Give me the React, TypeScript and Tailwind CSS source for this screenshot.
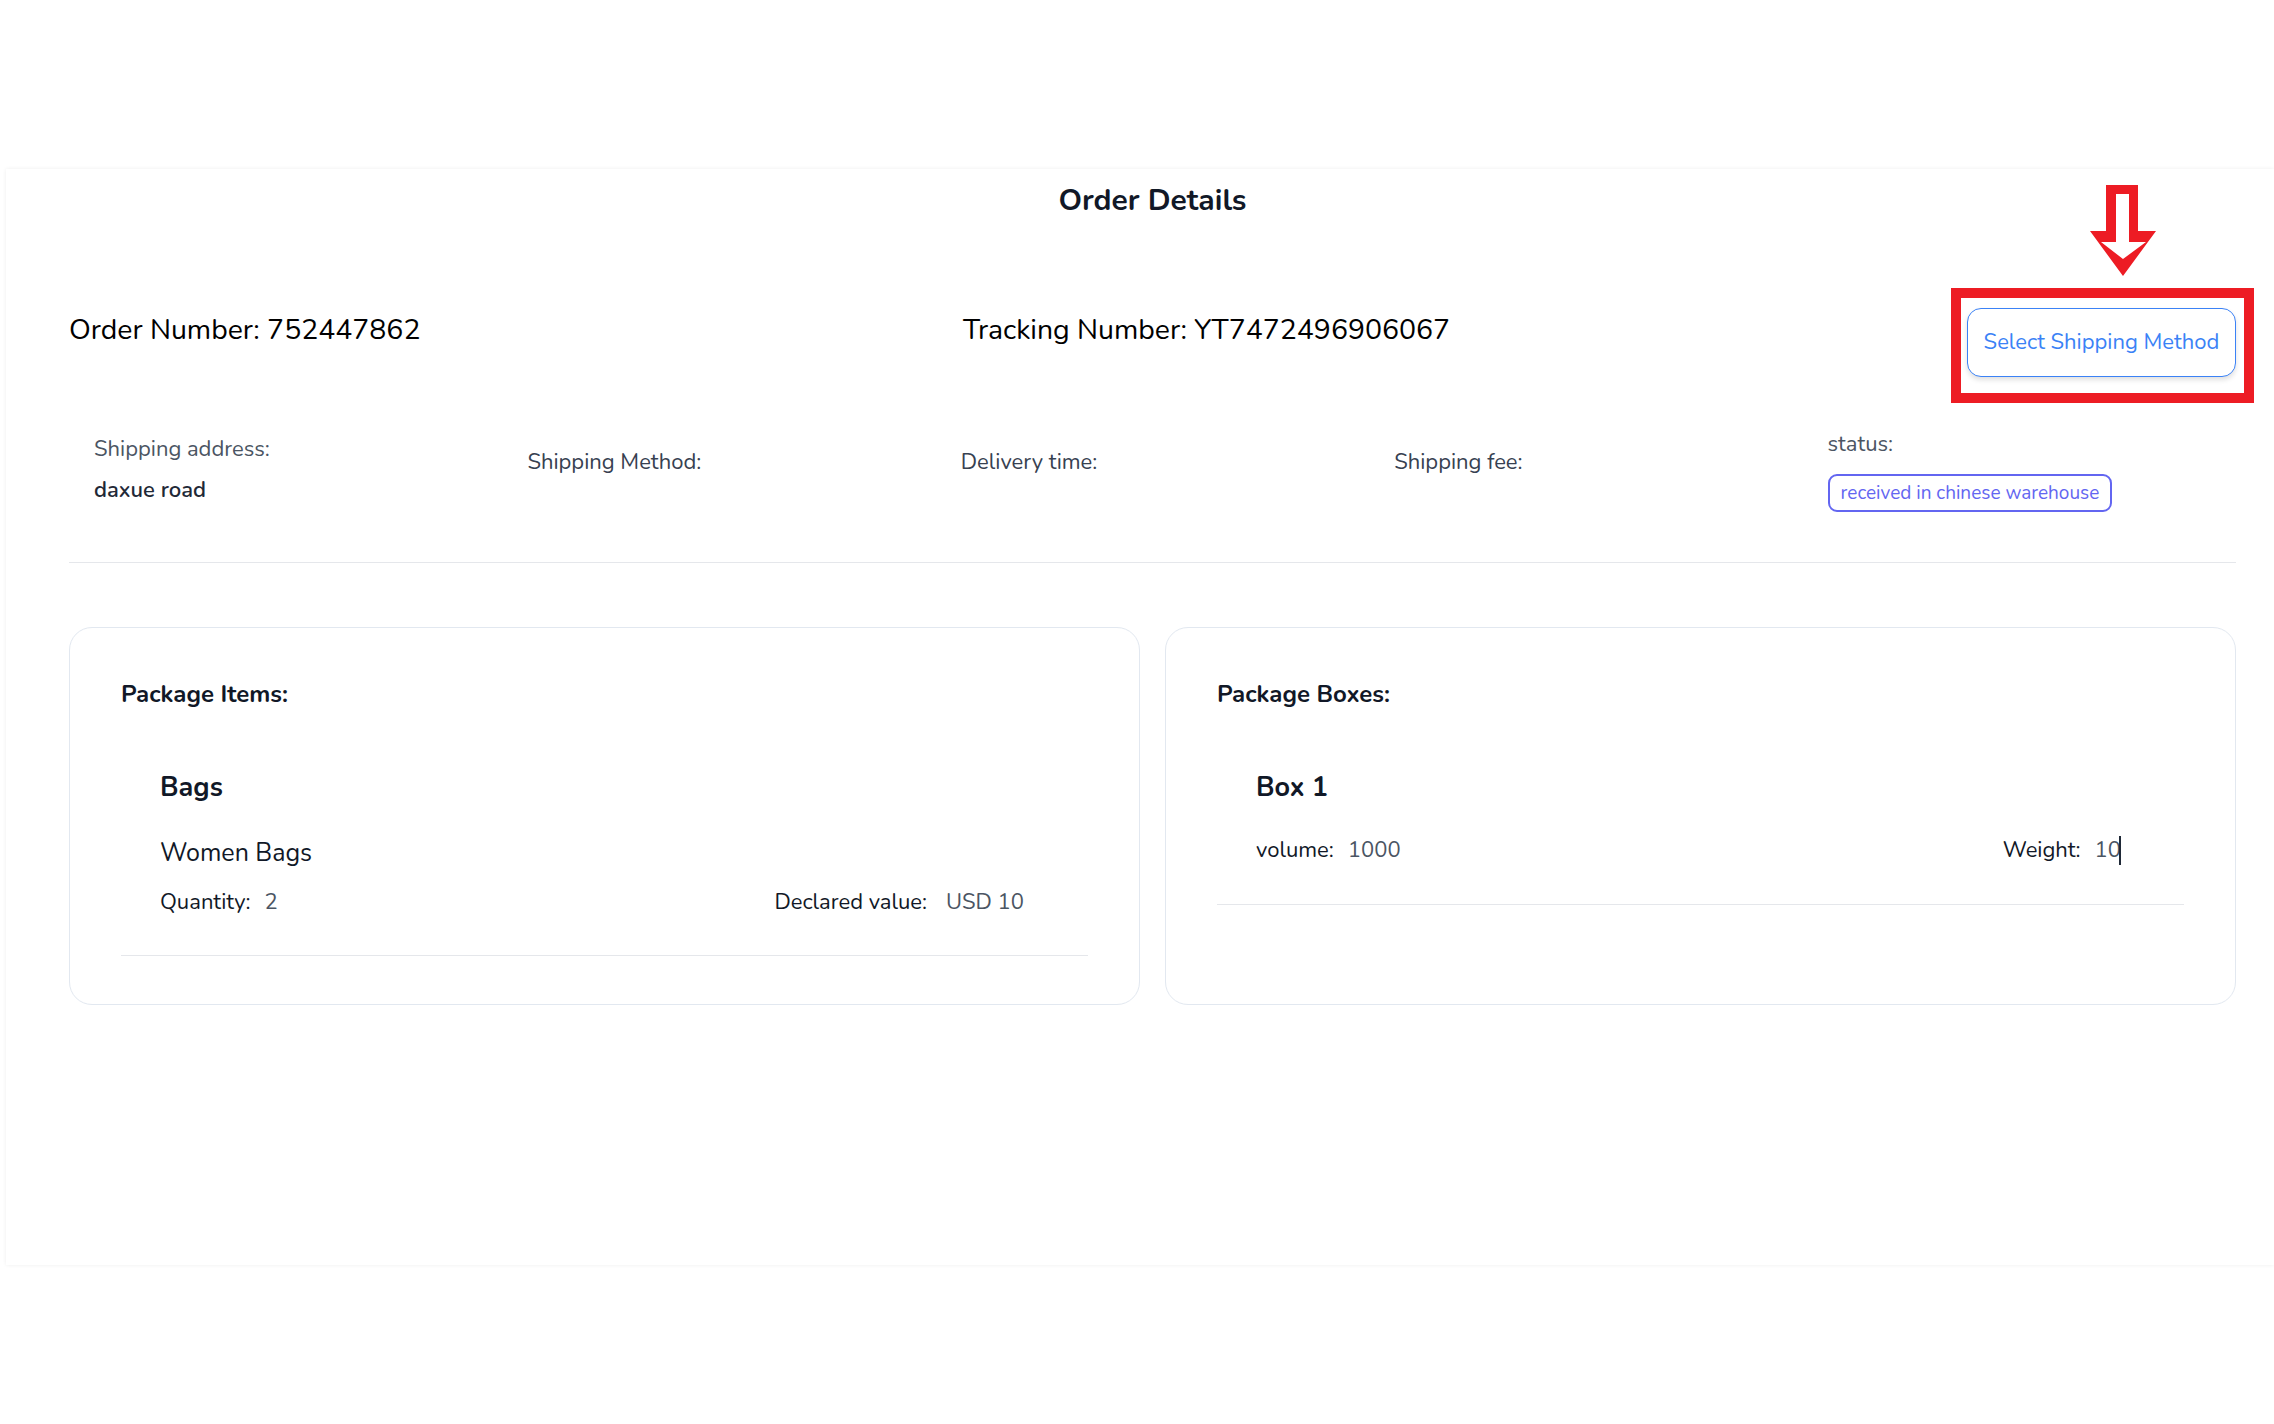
import React from 'react';

const font = { fontFamily: '"Nunito", "Lato", "Open Sans", sans-serif' };

const InfoCol: React.FC<{ label: string; children?: React.ReactNode; muted?: boolean }> = ({
    label,
    children,
    muted
}) => (
    <div className="flex flex-col pl-[25px]">
        <div className={`text-[22px] leading-[35px] ${muted ? 'text-[#4b5563]' : 'text-[#374151]'}`}>{label}</div>
        {children ?? <div className="h-[14px]" />}
    </div>
);

const Field: React.FC<{ label: string; value: string; gap?: string; caret?: boolean }> = ({
    label,
    value,
    gap = 'gap-[14px]',
    caret
}) => (
    <div className={`flex items-center ${gap} text-[22px] leading-[35px]`}>
        <span className="text-[#111827]">{label}</span>
        <span className="flex items-center text-[#4b5563]">
            {value}
            {caret && <span className="-ml-[2px] inline-block h-[29px] w-[2px] bg-[#1f2937]" />}
        </span>
    </div>
);

const Card: React.FC<{ title: string; children: React.ReactNode }> = ({ title, children }) => (
    <div className="rounded-[23px] border border-[#e2e8f0] px-[51px] pt-[47px] pb-[48px]">
        <div className="text-[24px] font-bold leading-[39px] text-[#111827]">{title}</div>
        {children}
    </div>
);

export default function App() {
    return (
        <div className="h-[1424px] w-full overflow-hidden bg-white" style={font}>
            <div className="ml-[6px] mt-[169px] h-[1096px] w-[2268px] pl-[63px] pr-[38px] pt-[12px] shadow-[0_0_4px_rgba(0,0,0,0.07)]">
                <h1 className="text-center text-[30px] font-bold leading-[40px] text-[#111827]">Order Details</h1>

                {/* header row */}
                <div className="mt-[87px] grid grid-cols-[894px_1fr_auto] items-start">
                    <div className="text-[28.4px] leading-[44px] text-black">Order Number: 752447862</div>
                    <div className="text-[28.4px] leading-[44px] text-black">Tracking Number: YT7472496906067</div>
                    <div className="relative h-[69px] w-[269px]">
                        <button className="h-full w-full rounded-[14px] border-[1.5px] border-[#3b82f6] bg-white text-[22px] text-[#3b82f6] shadow-[0_3px_5px_rgba(0,0,0,0.12)]">
                            Select Shipping Method
                        </button>
                        <div className="pointer-events-none absolute -left-[16px] -right-[18px] -top-[20px] -bottom-[26px] border-[10px] border-[#ed1c24]" />
                        <svg
                            className="pointer-events-none absolute left-[123px] -top-[123px]"
                            width="66"
                            height="91"
                            viewBox="0 0 66 91"
                        >
                            <polygon points="16,0 48,0 48,46 66,46 33,91 0,46 16,46" fill="#ed1c24" />
                            <polygon points="26,9 39,9 39,57 56,57 33,74 11,57 26,57" fill="#ffffff" />
                        </svg>
                    </div>
                </div>

                {/* info row */}
                <div className="grid h-[186px] grid-cols-5 items-center border-b border-[#e5e7eb]">
                    <InfoCol label="Shipping address:" muted>
                        <div className="mt-[6px] text-[22px] font-semibold leading-[35px] text-[#1f2937]">daxue road</div>
                    </InfoCol>
                    <InfoCol label="Shipping Method:" />
                    <InfoCol label="Delivery time:" />
                    <InfoCol label="Shipping fee:" />
                    <InfoCol label="status:" muted>
                        <div className="mt-[12px] flex">
                            <span className="flex h-[38px] items-center rounded-[9px] border-2 border-[#6366f1] px-[11px] text-[19px] text-[#6366f1]">
                                received in chinese warehouse
                            </span>
                        </div>
                    </InfoCol>
                </div>

                {/* package cards */}
                <div className="mt-[64px] grid grid-cols-2 gap-[25px]">
                    <Card title="Package Items:">
                        <div className="mt-[52px] border-b border-[#e5e7eb] pb-[35px] pl-[39px] pr-[64px]">
                            <div className="text-[27px] font-bold leading-[43px] text-[#111827]">Bags</div>
                            <div className="mt-[25px] text-[25px] leading-[39px] text-[#111827]">Women Bags</div>
                            <div className="mt-[12px] flex justify-between">
                                <Field label="Quantity:" value="2" />
                                <Field label="Declared value:" value="USD 10" gap="gap-[19px]" />
                            </div>
                        </div>
                    </Card>
                    <Card title="Package Boxes:">
                        <div className="mt-[52px] border-b border-[#e5e7eb] pb-[36px] pl-[39px] pr-[63px]">
                            <div className="text-[27px] font-bold leading-[43px] text-[#111827]">Box 1</div>
                            <div className="mt-[24px] flex justify-between">
                                <Field label="volume:" value="1000" />
                                <Field label="Weight:" value="10" caret />
                            </div>
                        </div>
                    </Card>
                </div>
            </div>
        </div>
    );
}
